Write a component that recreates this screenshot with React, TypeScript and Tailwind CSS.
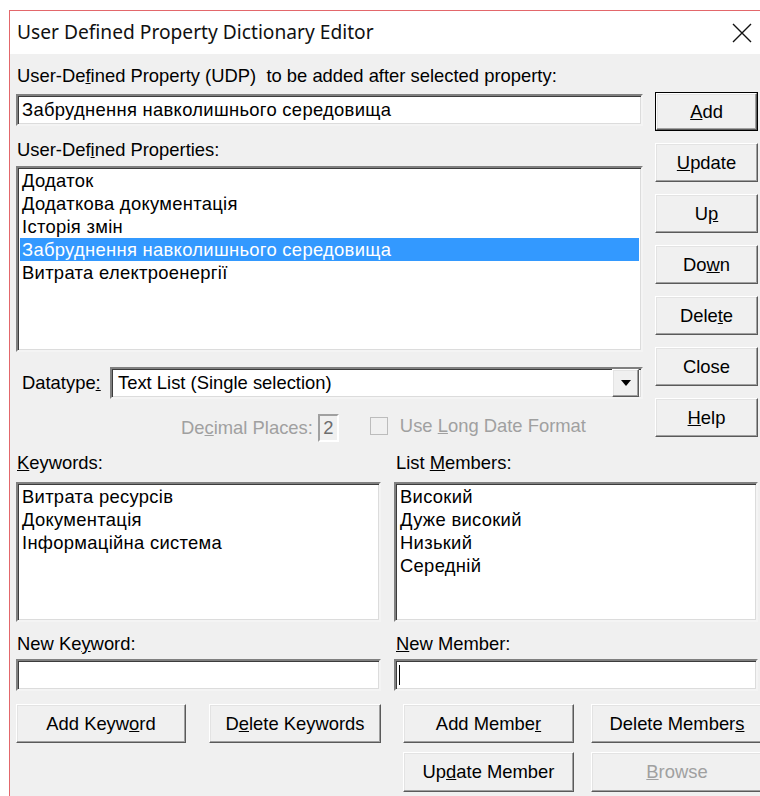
import type { ReactNode } from "react";

// classic win32 bevels
const sunken =
  "border-2 border-t-[#808080] border-l-[#808080] border-b-[#f4f4f4] border-r-[#f4f4f4] shadow-[inset_1px_1px_0_#3c3c3c,inset_-1px_-1px_0_#dcdcdc] bg-white";
const raised =
  "border border-t-white border-l-white border-b-[#5a5a5a] border-r-[#5a5a5a] shadow-[inset_-1px_-1px_0_#a0a0a0,inset_1px_1px_0_#e3e3e3] bg-[#f0f0f0]";

const Btn = ({
  children,
  w,
  def,
  disabled,
  className = "",
}: {
  children: ReactNode;
  w: string;
  def?: boolean;
  disabled?: boolean;
  className?: string;
}) => (
  <div className={`${w} ${className} ${def ? "border border-black" : ""} shrink-0`}>
    <div
      className={`${raised} h-full flex items-center justify-center ${
        disabled ? "text-[#a0a0a0]" : "text-black"
      }`}
    >
      <span>{children}</span>
    </div>
  </div>
);

const Label = ({ children, className = "" }: { children: ReactNode; className?: string }) => (
  <div className={`h-[20px] leading-[20px] whitespace-nowrap ${className}`}>{children}</div>
);

const properties = [
  "Додаток",
  "Додаткова документація",
  "Історія змін",
  "Забруднення навколишнього середовища",
  "Витрата електроенергії",
];
const keywords = ["Витрата ресурсів", "Документація", "Інформаційна система"];
const members = ["Високий", "Дуже високий", "Низький", "Середній"];

export default function App() {
  return (
    <div className="w-[760px] h-[796px] bg-white overflow-hidden font-['Liberation_Sans',Arial,sans-serif] text-[18.4px] text-black">
      <div className="ml-[9px] mt-[10px] w-[780px] h-[800px] border-l border-t border-[#e3676b] flex flex-col">
        {/* title bar */}
        <div className="h-[43px] w-[750px] bg-white flex items-center pl-[7px] pr-[8px] shrink-0">
          <span className="font-['Noto_Sans','Open_Sans',sans-serif] text-[19.2px] text-[#111]">
            User Defined Property Dictionary Editor
          </span>
          <svg className="ml-auto" width="20" height="20" viewBox="0 0 20 20">
            <path d="M1 1 L19 19 M19 1 L1 19" stroke="#111" strokeWidth="1.4" fill="none" />
          </svg>
        </div>

        <div className="flex-1 bg-[#f0f0f0] pl-[6px]">
          {/* upper area */}
          <div className="flex gap-[12px]">
            <div className="w-[627px] flex flex-col">
              <Label className="mt-[12px] pl-[1px]">
                User-De<u>f</u>ined Property (UDP)&nbsp; to be added after selected property:
              </Label>
              <div className={`${sunken} mt-[8px] h-[32px] pl-[4px] flex items-center tracking-[0.3px]`}>
                Забруднення навколишнього середовища
              </div>
              <Label className="mt-[14px] pl-[1px]">
                User-Def<u>i</u>ned Properties:
              </Label>
              <div className={`${sunken} mt-[6px] h-[186px] pt-[1px] px-[2px] tracking-[0.3px]`}>
                {properties.map((p, i) => (
                  <div
                    key={p}
                    className={`h-[23px] leading-[23px] pl-[2px] ${
                      i === 3 ? "bg-[#3399ff] text-white" : ""
                    }`}
                  >
                    {p}
                  </div>
                ))}
              </div>
              <div className="mt-[15px] h-[32px] flex items-center">
                <span className="w-[94px] pl-[6px]">
                  Datatype<u>:</u>
                </span>
                <div className={`${sunken} flex-1 h-full flex items-center pl-[6px] pr-[2px]`}>
                  <span className="flex-1">Text List (Single selection)</span>
                  <div className={`${raised} w-[27px] h-[28px] flex items-center justify-center`}>
                    <svg width="10" height="6" viewBox="0 0 10 6">
                      <path d="M0 0 H10 L5 6 Z" fill="#000" />
                    </svg>
                  </div>
                </div>
              </div>
              <div className="mt-[15px] h-[28px] flex items-center text-[#a0a0a0] whitespace-nowrap">
                <span className="ml-[165px]">
                  De<u>c</u>imal Places:
                </span>
                <div className="ml-[5px] w-[21px] h-[28px] shrink-0 border-2 border-t-[#a0a0a0] border-l-[#a0a0a0] border-b-white border-r-white bg-[#f0f0f0] flex items-center justify-center text-[#6d6d6d]">
                  2
                </div>
                <div className="ml-[31px] w-[18px] h-[18px] shrink-0 border border-[#bcbcbc] bg-[#f0f0f0] mb-[5px]" />
                <span className="ml-[12px] mb-[4px]">
                  Use <u>L</u>ong Date Format
                </span>
              </div>
            </div>

            <div className="flex flex-col gap-[12px] pt-[38px]">
              <Btn w="w-[103px] h-[39px]" def>
                <u>A</u>dd
              </Btn>
              <Btn w="w-[103px] h-[39px]">
                <u>U</u>pdate
              </Btn>
              <Btn w="w-[103px] h-[39px]">
                U<u>p</u>
              </Btn>
              <Btn w="w-[103px] h-[39px]">
                Do<u>w</u>n
              </Btn>
              <Btn w="w-[103px] h-[39px]">
                Dele<u>t</u>e
              </Btn>
              <Btn w="w-[103px] h-[39px]">Close</Btn>
              <Btn w="w-[103px] h-[39px]">
                <u>H</u>elp
              </Btn>
            </div>
          </div>

          {/* keyword / member lists */}
          <div className="flex gap-[13px] w-[742px]">
            <div className="w-[365px] flex flex-col">
              <Label className="mt-[11px] pl-[1px]">
                <u>K</u>eywords:
              </Label>
              <div className={`${sunken} mt-[9px] h-[140px] pt-[1px] pl-[4px] tracking-[0.3px]`}>
                {keywords.map((k) => (
                  <div key={k} className="h-[23px] leading-[23px]">
                    {k}
                  </div>
                ))}
              </div>
              <Label className="mt-[12px] pl-[1px]">
                New Ke<u>y</u>word:
              </Label>
              <div className={`${sunken} mt-[5px] h-[32px]`} />
              <div className="mt-[13px] flex gap-[23px]">
                <Btn w="w-[170px] h-[39px]">
                  Add Keyw<u>o</u>rd
                </Btn>
                <Btn w="w-[172px] h-[39px]">
                  D<u>e</u>lete Keywords
                </Btn>
              </div>
            </div>

            <div className="w-[364px] flex flex-col">
              <Label className="mt-[11px] pl-[2px]">
                List <u>M</u>embers:
              </Label>
              <div className={`${sunken} mt-[9px] h-[140px] pt-[1px] pl-[4px] tracking-[0.3px]`}>
                {members.map((m) => (
                  <div key={m} className="h-[23px] leading-[23px]">
                    {m}
                  </div>
                ))}
              </div>
              <Label className="mt-[12px] pl-[2px]">
                <u>N</u>ew Member:
              </Label>
              <div className={`${sunken} mt-[5px] h-[32px] flex items-center pl-[3px]`}>
                <div className="w-[1px] h-[20px] bg-black" />
              </div>
              <div className="mt-[13px] pl-[9px] grid grid-cols-[171px_172px] gap-x-[17px] gap-y-[9px]">
                <Btn w="w-[171px] h-[39px]">
                  Add Membe<u>r</u>
                </Btn>
                <Btn w="w-[172px] h-[39px]">
                  Delete Member<u>s</u>
                </Btn>
                <Btn w="w-[171px] h-[40px]">
                  Up<u>d</u>ate Member
                </Btn>
                <Btn w="w-[172px] h-[40px]" disabled>
                  <u>B</u>rowse
                </Btn>
              </div>
            </div>
          </div>
        </div>
      </div>
    </div>
  );
}
